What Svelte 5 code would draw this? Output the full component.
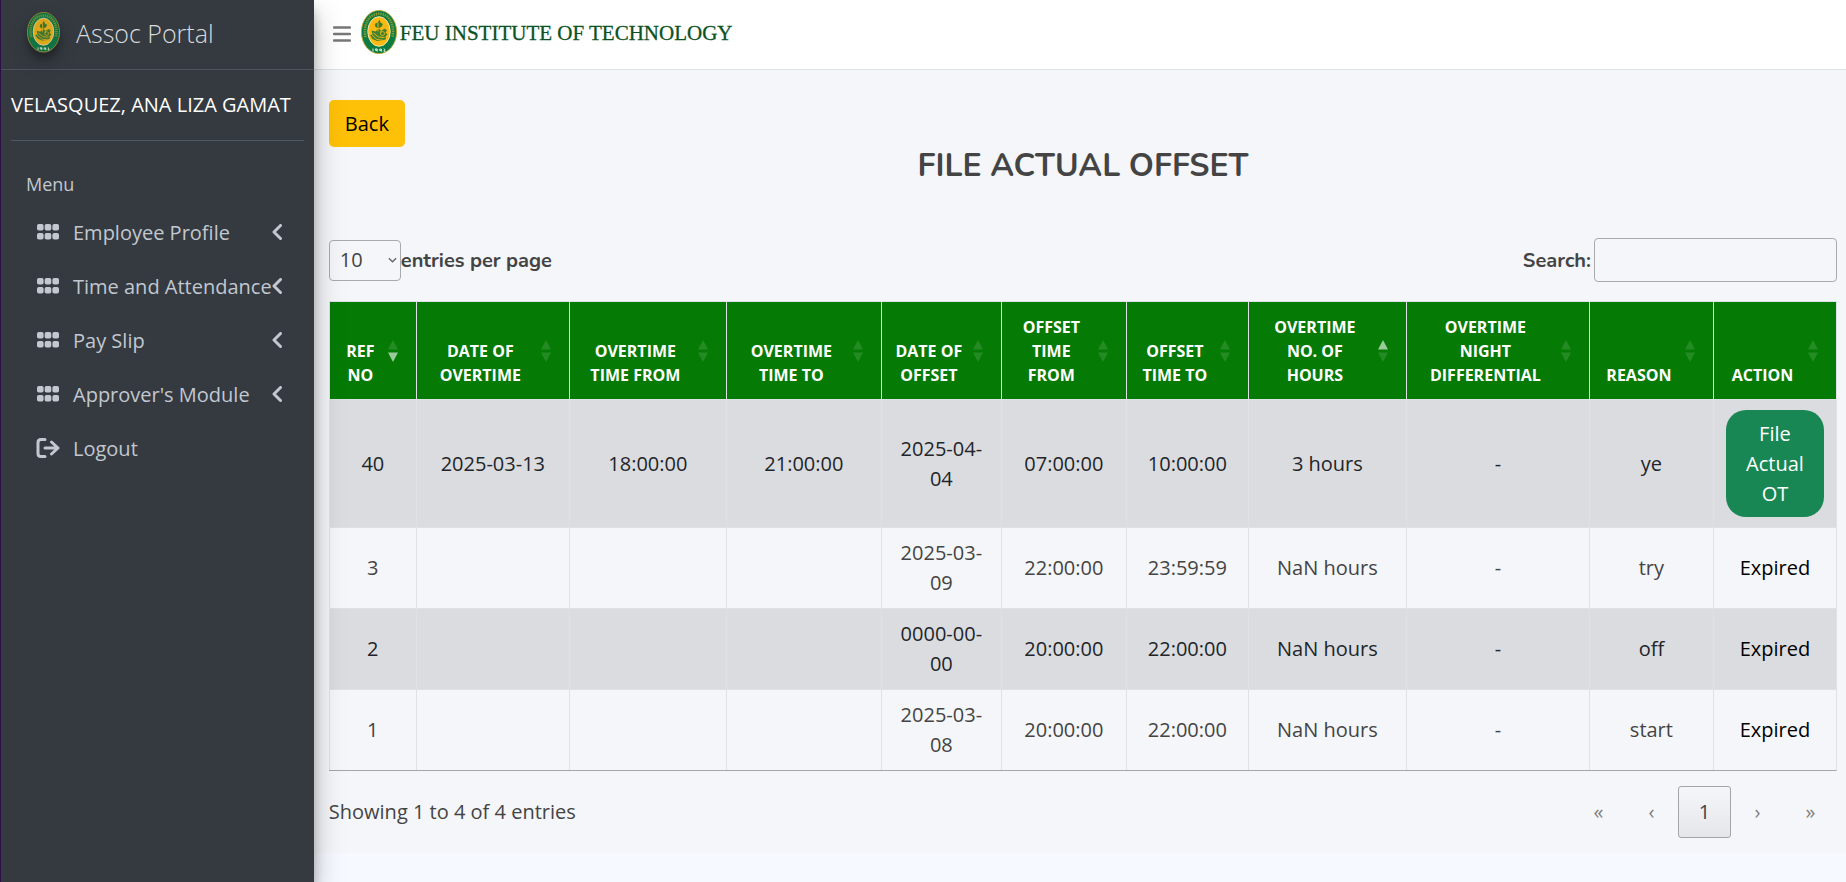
<script>
  let open = $state('');
  let search = $state('');
  let pageSize = $state('10');

  const menu = ['Employee Profile', 'Time and Attendance', 'Pay Slip', "Approver's Module"];

  const columns = [
    { label: 'REF NO', width: 87, sort: 'desc' },
    { label: 'DATE OF OVERTIME', width: 153 },
    { label: 'OVERTIME TIME FROM', width: 157 },
    { label: 'OVERTIME TIME TO', width: 155 },
    { label: 'DATE OF OFFSET', width: 120 },
    { label: 'OFFSET TIME FROM', width: 125 },
    { label: 'OFFSET TIME TO', width: 122 },
    { label: 'OVERTIME NO. OF HOURS', width: 158, sort: 'asc' },
    { label: 'OVERTIME NIGHT DIFFERENTIAL', width: 183 },
    { label: 'REASON', width: 124 },
    { label: 'ACTION', width: 123 }
  ];
  const total = columns.reduce((sum, c) => sum + c.width, 0);

  const rows = [
    ['40', '2025-03-13', '18:00:00', '21:00:00', '2025-04-04', '07:00:00', '10:00:00', '3 hours', '-', 'ye'],
    ['3', '', '', '', '2025-03-09', '22:00:00', '23:59:59', 'NaN hours', '-', 'try'],
    ['2', '', '', '', '0000-00-00', '20:00:00', '22:00:00', 'NaN hours', '-', 'off'],
    ['1', '', '', '', '2025-03-08', '20:00:00', '22:00:00', 'NaN hours', '-', 'start']
  ];
  const shown = $derived(rows.filter((r) => r.join(' ').toLowerCase().includes(search.toLowerCase())));
</script>

{#snippet seal()}
  <svg viewBox="0 0 36 44" aria-hidden="true">
    <ellipse cx="18" cy="22" rx="17.6" ry="21.6" fill="#0b7d43" stroke="#c9a227" stroke-width="0.8" />
    <path d="M4.600 27C2.800 20 4.500 12 9 7.300 14 2.600 22 2.600 27 7.300 31.500 12 33.200 20 31.400 27" fill="none" stroke="#8f9a35" stroke-width="2.600" stroke-dasharray="1.300 1" />
    <ellipse cx="18" cy="21.500" rx="11.200" ry="14.800" fill="#fcb913" stroke="#f0e6b0" stroke-width="1" />
    <path d="M18.500 9.500l1 3 2.400 1.500-1 2.500-2.500 1.500h-2.500l-2-2 .5-2.500 2.500-1z" fill="#3c7d2c" />
    <path d="M10.500 20.500l4 1 3-3 3 2 3.500-2 2 2-1.500 2 2 2-2 2 .5 2.500-3 1.500-6 .5-4.500-2-2.500-4 2.500-.5z" fill="#3f8230" />
    <path d="M11 25l5 4.500 7 1M12.500 23l5 4 6 .5M17 12.500v9M20 17v6M21.500 21.500a2 2 0 1 1-.1 0M13 31.500q5 2.500 10 0" fill="none" stroke="#fcb913" stroke-width="0.900" />
    <path d="M12 38.500v3M14.500 38.900h1.600v1.400h-1.600zM16.200 39.500v2M18.700 39.100h1.600v1.400h-1.600zM20.400 39.500v2M22.700 38.700q2 0 .2 2.600h1.800" fill="none" stroke="#f2f8ee" stroke-width="0.900" />
  </svg>
{/snippet}

<div class="app">
  <aside>
    <a class="brand" href="#home">
      <span class="brand-logo">{@render seal()}</span>
      <span>Assoc Portal</span>
    </a>
    <div class="side">
      <div class="user">VELASQUEZ, ANA LIZA GAMAT</div>
      <div class="menu-title">Menu</div>
      <nav>
        {#each menu as item}
          <button class="item" aria-expanded={open === item} onclick={() => (open = open === item ? '' : item)}>
            <svg class="grid-icon" viewBox="0 0 22 16" aria-hidden="true">
              {#each [0, 9] as y}
                {#each [0, 7.700, 15.400] as x}
                  <rect {x} {y} width="6.600" height="6.600" rx="1.800" />
                {/each}
              {/each}
            </svg>
            <span>{item}</span>
            <svg class="chev" viewBox="0 0 10 16" aria-hidden="true"><path d="M8.500 1.500L2 8l6.500 6.500" /></svg>
          </button>
        {/each}
        <a class="item" href="#logout">
          <svg class="out-icon" viewBox="0 0 24 20" aria-hidden="true"><path d="M9 1.500H5Q2 1.500 2 4.500v11q0 3 3 3h4M9 10h13M15.500 4l6.500 6-6.500 6" /></svg>
          <span>Logout</span>
        </a>
      </nav>
    </div>
  </aside>

  <div class="page">
    <header>
      <button class="burger" aria-label="Toggle menu">
        <svg viewBox="0 0 18 16" aria-hidden="true"><path d="M1 1.500h16M1 8h16M1 14.500h16" /></svg>
      </button>
      <span class="head-logo">{@render seal()}</span>
      <span class="school">FEU INSTITUTE OF TECHNOLOGY</span>
    </header>

    <main>
      <button class="back">Back</button>
      <h1>FILE ACTUAL OFFSET</h1>

      <div class="tools">
        <div class="length">
          <span class="select">
            <select id="page-size" bind:value={pageSize}>
              <option>10</option>
              <option>25</option>
              <option>50</option>
            </select>
            <svg viewBox="0 0 10 6" aria-hidden="true"><path d="M1 1l4 4 4-4" /></svg>
          </span>
          <label for="page-size">entries per page</label>
        </div>
        <div class="search">
          <label for="search">Search:</label>
          <input id="search" type="search" bind:value={search} />
        </div>
      </div>

      <table>
        <colgroup>
          {#each columns as c}
            <col style="width: {(c.width / total) * 100}%" />
          {/each}
        </colgroup>
        <thead>
          <tr>
            {#each columns as c}
              <th scope="col">
                {c.label}
                <svg class="sort" viewBox="0 0 10 22" aria-hidden="true">
                  <path class:on={c.sort === 'asc'} d="M5 0l5 9.500H0z" />
                  <path class:on={c.sort === 'desc'} d="M5 22l5-9.500H0z" />
                </svg>
              </th>
            {/each}
          </tr>
        </thead>
        <tbody>
          {#each shown as row}
            <tr>
              {#each row as cell}
                <td>{cell}</td>
              {/each}
              <td class="action">
                {#if row[0] === '40'}
                  <button class="file">File Actual OT</button>
                {:else}
                  Expired
                {/if}
              </td>
            </tr>
          {/each}
        </tbody>
      </table>

      <div class="foot">
        <div>Showing 1 to 4 of 4 entries</div>
        <div class="pager">
          <button disabled aria-label="First">«</button>
          <button disabled aria-label="Previous">‹</button>
          <button class="current">1</button>
          <button disabled aria-label="Next">›</button>
          <button disabled aria-label="Last">»</button>
        </div>
      </div>
    </main>
  </div>
</div>

<style>
  :global(body) {
    background: #f6f9ff;
  }
  .app {
    display: flex;
    min-height: 100vh;
    font: 20px/30px 'Open Sans', 'Noto Sans', sans-serif;
    color: #444;
  }
  .app :global(*) {
    box-sizing: border-box;
  }
  svg {
    display: block;
    flex: none;
  }
  button,
  select,
  input {
    font: inherit;
    color: inherit;
    margin: 0;
  }
  a {
    color: inherit;
    text-decoration: none;
  }

  aside {
    flex: 0 0 17%;
    border-left: 1px solid #2a1145;
    background: #343a40;
    color: #c2c7d0;
    box-shadow: 0 14px 28px rgba(0, 0, 0, 0.25), 0 10px 10px rgba(0, 0, 0, 0.22);
    z-index: 1;
  }
  .brand {
    display: flex;
    align-items: center;
    gap: 16px;
    height: 70px;
    padding: 0 26px 4px;
    border-bottom: 1px solid #4b545c;
    font-size: 25px;
    font-weight: 300;
    color: #d8dadc;
  }
  .brand-logo {
    width: 33px;
    border-radius: 50%;
    box-shadow: 0 10px 20px rgba(0, 0, 0, 0.19), 0 6px 6px rgba(0, 0, 0, 0.23);
  }
  .brand-logo svg {
    opacity: 0.85;
  }
  .side {
    padding: 0 10px;
  }
  .user {
    padding: 20px 0;
    border-bottom: 1px solid #4f5962;
    color: #fff;
    font-weight: 500;
    white-space: nowrap;
  }
  .menu-title {
    padding: 28px 15px 9px;
    font-size: 18px;
  }
  nav {
    display: flex;
    flex-direction: column;
    gap: 4px;
  }
  .item {
    display: flex;
    align-items: center;
    height: 50px;
    padding: 0 22px 0 25px;
    border: 0;
    background: none;
    text-align: left;
    white-space: nowrap;
  }
  .item span {
    flex: 1;
    width: 0;
  }
  .grid-icon {
    width: 22px;
    height: 16px;
    margin: 0 14px 2px 1px;
    fill: currentColor;
  }
  .out-icon {
    width: 24px;
    height: 20px;
    margin: 0 13px 2px 0;
  }
  .chev {
    width: 10px;
    height: 16px;
    margin-bottom: 2px;
  }
  .chev path,
  .out-icon path {
    fill: none;
    stroke: currentColor;
    stroke-width: 3;
    stroke-linecap: round;
    stroke-linejoin: round;
  }

  .page {
    flex: 1;
    min-width: 0;
  }
  header {
    display: flex;
    align-items: center;
    height: 70px;
    padding: 0 16px 6px;
    border-bottom: 1px solid #dee2e6;
    background: #fff;
  }
  .burger {
    padding: 4px 10px 0 3px;
    border: 0;
    background: none;
    color: #777;
  }
  .burger svg {
    width: 18px;
    height: 16px;
  }
  .burger path {
    stroke: currentColor;
    stroke-width: 2.4;
    stroke-linecap: round;
  }
  .head-logo {
    width: 36px;
  }
  .school {
    padding: 2px 0 0 3px;
    font-family: 'Liberation Serif', serif;
    font-size: 21px;
    color: #0b5224;
    -webkit-text-stroke: 0.3px #0b5224;
    white-space: nowrap;
  }

  main {
    padding: 30px 9px 15px 15px;
    background: #f4f6f9;
  }
  .back {
    display: block;
    height: 47px;
    padding: 0 16px;
    border: 0;
    border-radius: 5px;
    background: #ffc107;
    color: #000;
  }
  h1 {
    margin: 0 0 53px;
    font: 700 32px/38px Nunito, Lato, sans-serif;
    text-align: center;
  }
  .tools,
  .foot,
  .length,
  .search {
    display: flex;
    align-items: center;
  }
  .tools,
  .foot {
    justify-content: space-between;
  }
  .tools {
    margin-bottom: 19px;
  }
  label {
    padding-top: 2px;
    font-family: Nunito, Lato, sans-serif;
    font-weight: 700;
  }
  .select {
    display: grid;
    align-items: center;
  }
  .select > * {
    grid-area: 1 / 1;
  }
  .select svg {
    justify-self: end;
    width: 9px;
    height: 6px;
    margin-right: 4px;
    fill: none;
    stroke: #666;
    stroke-width: 1.5;
    pointer-events: none;
  }
  select,
  input {
    border: 1px solid #aaa;
    border-radius: 4px;
    background: transparent;
  }
  select {
    appearance: none;
    width: 72px;
    height: 41px;
    padding: 0 10px;
  }
  input {
    width: 243px;
    height: 44px;
    margin-left: 3px;
    padding: 0 8px;
  }

  table {
    width: 100%;
    table-layout: fixed;
    border-collapse: separate;
    border-spacing: 0;
    border-right: 1px solid #dee2e6;
    border-bottom: 1px solid #a4a7aa;
    text-align: center;
  }
  th {
    position: relative;
    padding: 13px 37px 12px 12px;
    border-top: 1px solid #dee2e6;
    border-left: 1px solid #dee2e6;
    background: #057a05;
    color: #fff;
    font-size: 16px;
    line-height: 24px;
    vertical-align: bottom;
  }
  .sort {
    position: absolute;
    top: 50%;
    right: 18px;
    width: 10px;
    height: 22px;
    margin-top: -11px;
    fill: #fff;
  }
  .sort path {
    opacity: 0.13;
  }
  .sort path.on {
    opacity: 0.6;
  }
  td {
    padding: 10px 12px;
    border-top: 1px solid #dee2e6;
    border-left: 1px solid #dee2e6;
  }
  tbody tr:nth-child(odd) {
    background: #dbdce0;
    color: #212529;
  }
  .action {
    color: #000;
  }
  .file {
    display: block;
    width: 100%;
    padding: 9px 12px 8px;
    border: 0;
    border-radius: 20px;
    background: #198754;
    color: #fff;
  }

  .foot {
    padding-top: 15px;
  }
  .pager {
    display: flex;
  }
  .pager button {
    width: 53px;
    height: 52px;
    padding: 0;
    border: 1px solid transparent;
    border-radius: 3px;
    background: none;
    color: #7f7f7f;
  }
  .pager .current {
    border-color: #a4a5a7;
    background: linear-gradient(#f4f6f9, #e4e6e9);
    color: #444;
  }
</style>
